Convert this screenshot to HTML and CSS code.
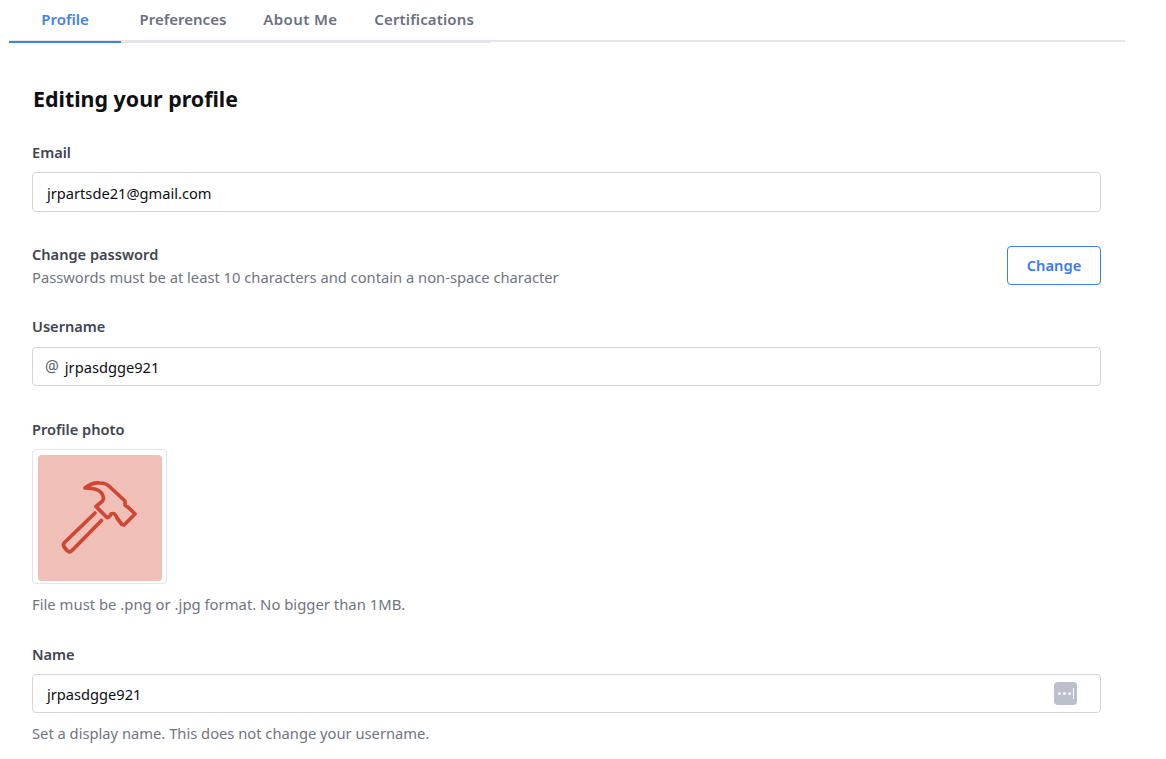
FILE: index.html
```html
<!DOCTYPE html>
<html lang="en">
<head>
<meta charset="utf-8">
<title>Profile</title>
<link rel="stylesheet" href="styles.css">
</head>
<body>
<div class="page">
  <nav class="tabs">
    <div class="tab-group">
      <a class="tab tab-active">Profile</a>
      <a class="tab">Preferences</a>
      <a class="tab tab-about">About Me</a>
      <a class="tab tab-cert">Certifications</a>
    </div>
  </nav>
  <main class="content">
    <h1 class="title">Editing your profile</h1>
    <section class="field field-email">
      <div class="label">Email</div>
      <div class="input input-email">jrpartsde21@gmail.com</div>
    </section>
    <section class="password-row">
      <div class="password-text">
        <div class="label">Change password</div>
        <div class="hint hint-tight">Passwords must be at least 10 characters and contain a non-space character</div>
      </div>
      <button class="change-btn">Change</button>
    </section>
    <section class="field field-username">
      <div class="label">Username</div>
      <div class="input input-username"><span class="at">@</span>jrpasdgge921</div>
    </section>
    <section class="field field-photo">
      <div class="label">Profile photo</div>
      <div class="photo-frame">
        <div class="photo">
          <svg class="hammer" viewBox="0 0 124 126" width="124" height="126" fill="none" stroke="#cf4733" stroke-width="3.7" stroke-linejoin="round" stroke-linecap="round">
            <path d="M57 58 L26.5 87.5 Q24.5 90 26.5 92.5 L29 95.5 Q31.5 98 34 95.5 L63.5 65.5"/>
            <path d="M47 33 Q54 27 62 28 Q69 28 73 33 L87 46 L87 50 L91 53 L97 59 L86 70 L84 69.5 L79 63 Q77 57 73 59 Q71 63 69 62.5 L58 51.5 L64.5 46 Q66 44 65 41 Q63 33 47 33 Z"/>
          </svg>
        </div>
      </div>
      <div class="hint hint-photo">File must be .png or .jpg format. No bigger than 1MB.</div>
    </section>
    <section class="field field-name">
      <div class="label">Name</div>
      <div class="input input-name">
        <span>jrpasdgge921</span>
        <span class="pw-badge"><span class="dots"><i></i><i></i><i></i></span><b class="caret"></b></span>
      </div>
      <div class="hint hint-name">Set a display name. This does not change your username.</div>
    </section>
  </main>
</div>
</body>
</html>
```
FILE: styles.css
```css
* { box-sizing: border-box; }
html, body { margin: 0; padding: 0; background: #fff; }
body {
  font-family: "Noto Sans", "Open Sans", sans-serif;
  font-size: 14.7px;
  color: #0e0e10;
  height: 759px;
  overflow: hidden;
}
.page { width: 1125px; padding-left: 9px; }
.tabs {
  height: 42px;
  border-bottom: 2px solid #e5e5ea;
  display: flex;
}
.tab-group {
  display: flex;
  height: 43px;
  border-bottom: 2px solid #e4e4e9;
  width: 482px;
  flex: none;
}
.tab {
  font-size: 15px;
  font-weight: 600;
  color: #6b7080;
  height: 43px;
  line-height: 38px;
  padding: 0 18.5px;
  flex: none;
}
.tab-active {
  width: 112px;
  padding: 0;
  text-align: center;
  color: #3f82f5;
  border-bottom: 2px solid #3f82f5;
}
.tab-about { letter-spacing: 0.38px; }
.tab-cert { letter-spacing: 0.12px; }
.content { width: 1069px; margin-left: 23px; }
.title {
  margin: 42px 0 0 1px;
  font-size: 21.4px;
  line-height: 30px;
  font-weight: 700;
  color: #0e1014;
}
.label {
  font-size: 14.6px;
  font-weight: 600;
  color: #41454f;
  line-height: 20px;
}
.input {
  height: 39px;
  margin-top: 10px;
  border: 1px solid #d3d4d9;
  border-radius: 4px;
  padding: 0 14px;
  display: flex;
  align-items: center;
  font-size: 14.65px;
  color: #0e0e10;
  background: #fff;
}
.input-email { height: 40px; padding-top: 1px; }
.input-username { margin-top: 11px; }
.at { color: #5e6472; font-size: 15.4px; margin-left: -2px; margin-right: 6px; }
.field-email { margin-top: 28px; }
.password-row {
  margin-top: 32px;
  display: flex;
  justify-content: space-between;
  align-items: flex-start;
}
.hint {
  font-size: 14.73px;
  color: #70747f;
  line-height: 20px;
}
.hint-tight { margin-top: 3px; }
.change-btn {
  width: 94px;
  height: 39px;
  margin-top: 2px;
  border: 1px solid #3b7cf0;
  border-radius: 4px;
  background: #fff;
  color: #3b78ef;
  font: 600 14.7px "Noto Sans", "Open Sans", sans-serif;
  padding: 0 0 2px;
}
.field-username { margin-top: 29px; }
.field-photo { margin-top: 33px; }
.photo-frame {
  width: 135px;
  height: 135px;
  margin-top: 10px;
  border: 1px solid #e5e5ea;
  border-radius: 4px;
  padding: 5px;
}
.photo {
  width: 124px;
  height: 126px;
  border-radius: 4px;
  background: #efbfb8;
}
.hammer { display: block; }
.hint-photo { margin-top: 10px; font-size: 14.85px; }
.field-name { margin-top: 30px; }
.input-name { justify-content: space-between; padding-right: 23px; }
.pw-badge {
  width: 23px;
  height: 23px;
  border-radius: 4px;
  background: #bcbfcc;
  display: flex;
  align-items: center;
  justify-content: center;
  gap: 2px;
}
.dots { display: flex; gap: 2px; }
.dots i { display: block; width: 3px; height: 3px; border-radius: 50%; background: #fff; }
.caret { display: block; width: 1px; height: 11px; background: #fff; }
.hint-name { margin-top: 10px; }
```
